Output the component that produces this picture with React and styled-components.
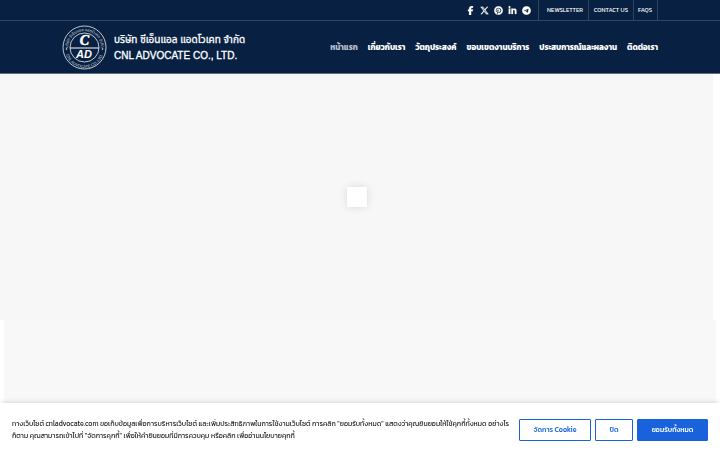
import React, { useState } from 'react';
import styled, { createGlobalStyle } from 'styled-components';
import {
	FaFacebookF,
	FaXTwitter,
	FaPinterest,
	FaLinkedinIn,
	FaTelegram,
} from 'react-icons/fa6';

const GlobalStyle = createGlobalStyle`
	* {
		box-sizing: border-box;
	}
	body {
		margin: 0;
		background: #fff;
		font-family: 'Kanit', 'Open Sans', 'Noto Sans Thai', sans-serif;
		overflow: hidden;
	}
`;

const Header = styled.header`
	background: #082143;
	color: #fff;
	border-bottom: 1px solid #5d6c83;
`;

const TopBar = styled.div`
	display: flex;
	justify-content: flex-end;
	height: 21px;
	padding: 0 62px;
	border-bottom: 1px solid #31445f;
`;

const Social = styled.div`
	display: flex;
	align-items: center;
	gap: 5px;
	padding-right: 7px;
	border-right: 1px solid #31445f;

	a {
		display: flex;
		justify-content: center;
		width: 9px;
		color: #fff;
		font-size: 9px;
	}
	svg {
		flex: none;
		stroke-width: 10px;
	}
`;

const TopLink = styled.a`
	display: flex;
	align-items: center;
	justify-content: flex-end;
	width: ${(props) => props.$width};
	padding-right: 5px;
	border-right: 1px solid #31445f;
	color: #fff;
	font-size: 6px;
	line-height: 20px;
	text-decoration: none;
	white-space: nowrap;
`;

const MainBar = styled.div`
	display: flex;
	align-items: center;
	justify-content: space-between;
	height: 52px;
	padding: 0 62px;
`;

const Brand = styled.a`
	display: flex;
	align-items: center;
	gap: 7px;
	color: #fff;
	text-decoration: none;
	white-space: nowrap;

	svg {
		flex: none;
	}
`;

const BrandName = styled.span`
	display: flex;
	flex-direction: column;
	padding-top: 2px;
	font: 10px/16px 'Liberation Sans', 'Noto Sans Thai', sans-serif;
	-webkit-text-stroke: 0.3px #fff;
`;

const Nav = styled.nav`
	display: flex;
	gap: 10px;
`;

const NavLink = styled.a`
	color: ${(props) => (props.$active ? '#b5bdc8' : '#fff')};
	font-size: 8px;
	font-weight: 700;
	line-height: 16px;
	text-decoration: none;
	white-space: nowrap;
`;

const Slider = styled.section`
	display: flex;
	align-items: center;
	justify-content: center;
	height: 246px;
	margin-right: 7px;
	background: #f7f7f7;
`;

const Loader = styled.div`
	width: 20px;
	height: 20px;
	background: #fff;
	box-shadow: 0 0 8px rgba(0, 0, 0, 0.12);
`;

const Content = styled.section`
	height: 130px;
	margin: 0 4px;
	background: #f8f8f8;
`;

const CookieBar = styled.aside`
	position: fixed;
	right: 0;
	bottom: 0;
	left: 0;
	display: flex;
	align-items: center;
	justify-content: space-between;
	gap: 8px;
	min-height: 47px;
	padding: 6px 12px 0;
	background: #fff;
	box-shadow: 0 -1px 5px rgba(0, 0, 0, 0.12);
`;

const CookieText = styled.p`
	flex: 1;
	margin: 0;
	color: #212121;
	font-size: 7px;
	line-height: 12px;
`;

const Buttons = styled.div`
	display: flex;
	gap: 4px;
`;

const Button = styled.button`
	width: ${(props) => props.$width};
	height: 22px;
	padding: 0;
	border: 1px solid #1863dc;
	border-radius: 1px;
	background: ${(props) => (props.$primary ? '#1863dc' : '#fff')};
	color: ${(props) => (props.$primary ? '#fff' : '#1863dc')};
	font-family: inherit;
	font-size: 7px;
	font-weight: 500;
	white-space: nowrap;
`;

const social = [
	['Facebook', FaFacebookF],
	['X', FaXTwitter],
	['Pinterest', FaPinterest],
	['LinkedIn', FaLinkedinIn],
	['Telegram', FaTelegram],
];

const menu = [
	'หน้าแรก',
	'เกี่ยวกับเรา',
	'วัตถุประสงค์',
	'ขอบเขตงานบริการ',
	'ประสบการณ์และผลงาน',
	'ติดต่อเรา',
];

const Logo = () => (
	<svg width="45" height="45" viewBox="0 0 90 90" fill="#fff">
		<defs>
			<path id="ring-top" d="M12 45a33 33 0 0 1 66 0" />
			<path id="ring-bottom" d="M6 47a39 39 0 0 0 78 0" />
		</defs>
		<g fill="none" stroke="#fff">
			<circle cx="45" cy="45" r="43" strokeWidth="1.5" />
			<circle cx="45" cy="45" r="29" strokeWidth="1.5" />
			<path d="M16 46h58" strokeWidth="2" />
		</g>
		<circle cx="9" cy="48" r="1.5" />
		<circle cx="81" cy="48" r="1.5" />
		<g
			fontFamily="Noto Sans Thai, sans-serif"
			fontSize="8"
			textAnchor="middle"
			opacity="0.8"
		>
			<text>
				<textPath href="#ring-top" startOffset="50%">
					บริษัท ซีเอ็นแอล แอดโวเคท จำกัด
				</textPath>
			</text>
			<text fontFamily="Liberation Sans">
				<textPath href="#ring-bottom" startOffset="50%">
					CNL ADVOCATE CO.,LTD.
				</textPath>
			</text>
		</g>
		<g fontStyle="italic" fontWeight="700" textAnchor="middle">
			<text
				x="45"
				y="40"
				fontSize="28"
				fontFamily="Liberation Serif"
				stroke="#fff"
			>
				C
			</text>
			<text x="44" y="66" fontSize="22" fontFamily="Liberation Sans">
				AD
			</text>
		</g>
	</svg>
);

const App = () => {
	const [cookies, setCookies] = useState(true);
	const close = () => setCookies(false);
	return (
		<>
			<GlobalStyle />
			<Header>
				<TopBar>
					<Social>
						{social.map(([name, Icon]) => (
							<a key={name} href="#social" aria-label={name}>
								<Icon />
							</a>
						))}
					</Social>
					<TopLink href="#newsletter" $width="50px">
						NEWSLETTER
					</TopLink>
					<TopLink href="#contact" $width="45px">
						CONTACT US
					</TopLink>
					<TopLink href="#faqs" $width="24px">
						FAQS
					</TopLink>
				</TopBar>
				<MainBar>
					<Brand href="#home">
						<Logo />
						<BrandName>
							<span>บริษัท ซีเอ็นแอล แอดโวเคท จำกัด</span>
							<span>CNL ADVOCATE CO., LTD.</span>
						</BrandName>
					</Brand>
					<Nav>
						{menu.map((item, i) => (
							<NavLink key={item} href="#menu" $active={i === 0}>
								{item}
							</NavLink>
						))}
					</Nav>
				</MainBar>
			</Header>
			<main>
				<Slider>
					<Loader />
				</Slider>
				<Content />
			</main>
			{cookies && (
				<CookieBar>
					<CookieText>
						ทางเว็บไซต์ cnladvocate.com ขอเก็บข้อมูลเพื่อการบริหารเว็บไซต์
						และเพิ่มประสิทธิภาพในการใช้งานเว็บไซต์ การคลิก "ยอมรับทั้งหมด"
						แสดงว่าคุณยินยอมให้ใช้คุกกี้ทั้งหมด อย่างไรก็ตาม
						คุณสามารถเข้าไปที่ "จัดการคุกกี้" เพื่อให้คำยินยอมที่มีการควบคุม
						หรือคลิก เพื่ออ่านนโยบายคุกกี้
					</CookieText>
					<Buttons>
						<Button $width="72px" onClick={close}>
							จัดการ Cookie
						</Button>
						<Button $width="38px" onClick={close}>
							ปิด
						</Button>
						<Button $width="71px" $primary onClick={close}>
							ยอมรับทั้งหมด
						</Button>
					</Buttons>
				</CookieBar>
			)}
		</>
	);
};
export default App;
